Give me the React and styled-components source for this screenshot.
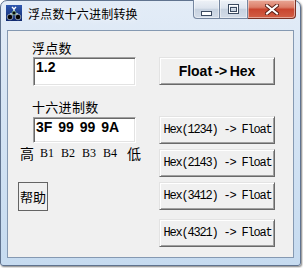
import React from 'react';
import styled, { createGlobalStyle } from 'styled-components';

const Global = createGlobalStyle`
  html, body { margin: 0; padding: 0; background: #ffffff; }
  body { width: 303px; height: 268px; overflow: hidden; }
  #root { width: 303px; height: 268px; }
`;

const Window = styled.div`
  box-sizing: border-box;
  width: 301px;
  height: 266px;
  border: 1px solid #60738f;
  border-radius: 7px 7px 3px 3px;
  background: linear-gradient(180deg, #e3ecf7 0%, #d7e5f4 35%, #c6dbf0 100%);
  box-shadow: 1px 1px 2px rgba(0, 0, 0, 0.5);
  display: flex;
  flex-direction: column;
  padding: 0 6px 7px 6px;
`;

const TitleBar = styled.div`
  display: flex;
  align-items: flex-start;
  height: 29px;
  margin: 0 -2px 0 -1px;
`;

const AppIcon = styled.svg`
  width: 16px;
  height: 16px;
  margin-top: 4px;
  flex: none;
`;

const Title = styled.div`
  margin: 4px 0 0 6px;
  font: 12px/17px "Noto Sans CJK SC", "Noto Sans", sans-serif;
  letter-spacing: 0.2px;
  color: #000;
  text-shadow: 0 0 6px rgba(255, 255, 255, 0.9);
  flex: 1;
`;

const Captions = styled.div`
  display: flex;
  margin-top: -1px;
`;

const CapBtn = styled.div`
  box-sizing: border-box;
  width: ${p => p.$w}px;
  height: 19px;
  display: flex;
  align-items: center;
  justify-content: center;
  border: 1px solid ${p => (p.$close ? '#7a3226' : '#7687a0')};
  border-top: none;
  border-left: ${p => (p.$first ? '1px solid #7687a0' : 'none')};
  border-radius: ${p => (p.$first ? '0 0 0 4px' : p.$close ? '0 0 4px 0' : '0')};
  background: ${p =>
    p.$close
      ? 'linear-gradient(180deg, #e9a796 0%, #dc7e69 40%, #c9452f 52%, #d15f45 100%)'
      : 'linear-gradient(180deg, #eef2f7 0%, #dde4ee 45%, #c7d2e0 52%, #d3dce8 100%)'};
  box-shadow: inset 0 0 0 1px rgba(255, 255, 255, 0.45);
`;

const Client = styled.div`
  box-sizing: border-box;
  flex: 1;
  background: #f0f0f0;
  border: 1px solid #8599b2;
  display: flex;
  align-items: flex-start;
  padding: 9px 0 0 10px;
`;

const LeftCol = styled.div`
  width: 120px;
  display: flex;
  flex-direction: column;
  align-items: flex-start;
`;

const RightCol = styled.div`
  margin-left: 21px;
  padding-top: 17px;
  display: flex;
  flex-direction: column;
`;

const Label = styled.div`
  margin: ${p => p.$mt}px 0 0 14px;
  height: 16px;
  font: 13px/16px "Noto Sans CJK SC", sans-serif;
  letter-spacing: 0.3px;
  color: #000;
`;

const Field = styled.div`
  box-sizing: border-box;
  margin: ${p => p.$mt}px 0 0 15px;
  width: 103px;
  height: ${p => p.$h}px;
  background: #ffffff;
  border: 1px solid;
  border-color: #a0a0a0 #ffffff #ffffff #a0a0a0;
  box-shadow: inset 1px 1px 0 #696969, inset -1px -1px 0 #e3e3e3;
  padding: 1px 3px 0 2px;
  font: bold 14px/16px "Liberation Sans", Arial, sans-serif;
  word-spacing: ${p => p.$ws || 0}px;
  color: #000;
  white-space: nowrap;
`;

const ByteRow = styled.div`
  margin: 2px 0 0 2px;
  height: 16px;
  display: grid;
  grid-template-columns: 20px 21px 21px 21px 24px auto;
  align-items: center;
`;

const HiLo = styled.span`
  font: 14px/16px "Noto Sans CJK SC", sans-serif;
  color: #000;
`;

const ByteName = styled.span`
  font: 12px/16px "Liberation Serif", "Times New Roman", serif;
  color: #000;
`;

const HelpButton = styled.div`
  box-sizing: border-box;
  margin-top: 21px;
  width: 30px;
  height: 29px;
  border: 1px solid #646464;
  background: #f0f0f0;
  display: flex;
  align-items: center;
  justify-content: center;
  font: 13px/16px "Noto Sans CJK SC", sans-serif;
  color: #000;
`;

const Button = styled.div`
  box-sizing: border-box;
  width: 116px;
  height: 28px;
  margin-top: ${p => p.$mt || 0}px;
  background: #f0f0f0;
  border: 1px solid;
  border-color: #e3e3e3 #696969 #696969 #e3e3e3;
  box-shadow: inset 1px 1px 0 #ffffff, inset -1px -1px 0 #a0a0a0;
  display: flex;
  align-items: center;
  justify-content: center;
  color: #000;
  white-space: nowrap;
`;

const BigText = styled.span`
  font: bold 14px/16px "Liberation Sans", Arial, sans-serif;
  word-spacing: -1.5px;
`;

const MonoText = styled.span`
  font: 12px/14px "Liberation Mono", "Courier New", monospace;
  letter-spacing: -1.2px;
  padding-left: 1px;
`;

function Icon() {
  return (
    <AppIcon viewBox="0 0 16 16">
      <defs>
        <linearGradient id="ig" x1="0" y1="0" x2="0" y2="1">
          <stop offset="0" stopColor="#2f58b0" />
          <stop offset="1" stopColor="#10296e" />
        </linearGradient>
      </defs>
      <rect x="0" y="0" width="16" height="16" fill="url(#ig)" />
      <path d="M6 2 L8 4 L10 2 M8 4 L8 7" fill="none" stroke="#ffffff" strokeWidth="1.4" />
      <path d="M4 9 L12 9" stroke="#ffffff" strokeWidth="1.2" />
      <circle cx="4" cy="12" r="2.8" fill="#050505" stroke="#d8e8f8" strokeWidth="0.6" />
      <circle cx="12" cy="12" r="2.8" fill="#050505" stroke="#d8e8f8" strokeWidth="0.6" />
      <circle cx="8" cy="8" r="2" fill="#0a0a0a" stroke="#9fe0a8" strokeWidth="0.6" />
    </AppIcon>
  );
}

function MinGlyph() {
  return (
    <svg width="11" height="7" viewBox="0 0 11 7" style={{ marginTop: 6 }}>
      <rect x="0.5" y="2.5" width="10" height="4" fill="#ffffff" stroke="#3b4a60" />
    </svg>
  );
}

function MaxGlyph() {
  return (
    <svg width="11" height="10" viewBox="0 0 11 10">
      <rect x="0.5" y="0.5" width="10" height="9" fill="none" stroke="#3b4a60" />
      <rect x="1.5" y="1.5" width="8" height="7" fill="none" stroke="#ffffff" />
      <rect x="2.5" y="3.5" width="6" height="4" fill="none" stroke="#3b4a60" />
    </svg>
  );
}

function CloseGlyph() {
  return (
    <svg width="14" height="11" viewBox="0 0 14 11">
      <path d="M2 1.5 L12 9.5 M12 1.5 L2 9.5" stroke="#5a1f16" strokeWidth="4" strokeLinecap="square" />
      <path d="M2 1.5 L12 9.5 M12 1.5 L2 9.5" stroke="#ffffff" strokeWidth="2" strokeLinecap="square" />
    </svg>
  );
}

export default function App() {
  const hexOrders = ['1234', '2143', '3412', '4321'];
  const margins = [31, 5, 5, 9];
  return (
    <>
      <Global />
      <Window>
        <TitleBar>
          <Icon />
          <Title>浮点数十六进制转换</Title>
          <Captions>
            <CapBtn $w={27} $first>
              <MinGlyph />
            </CapBtn>
            <CapBtn $w={28}>
              <MaxGlyph />
            </CapBtn>
            <CapBtn $w={48} $close>
              <CloseGlyph />
            </CapBtn>
          </Captions>
        </TitleBar>
        <Client>
          <LeftCol>
            <Label $mt={0}>浮点数</Label>
            <Field $mt={1} $h={29}>1.2</Field>
            <Label $mt={13}>十六进制数</Label>
            <Field $mt={2} $h={26} $ws={2}>3F 99 99 9A</Field>
            <ByteRow>
              <HiLo>高</HiLo>
              <ByteName>B1</ByteName>
              <ByteName>B2</ByteName>
              <ByteName>B3</ByteName>
              <ByteName>B4</ByteName>
              <HiLo>低</HiLo>
            </ByteRow>
            <HelpButton>帮助</HelpButton>
          </LeftCol>
          <RightCol>
            <Button>
              <BigText>Float -&gt; Hex</BigText>
            </Button>
            {hexOrders.map((o, i) => (
              <Button key={o} $mt={margins[i]}>
                <MonoText>Hex({o}) -&gt; Float</MonoText>
              </Button>
            ))}
          </RightCol>
        </Client>
      </Window>
    </>
  );
}
